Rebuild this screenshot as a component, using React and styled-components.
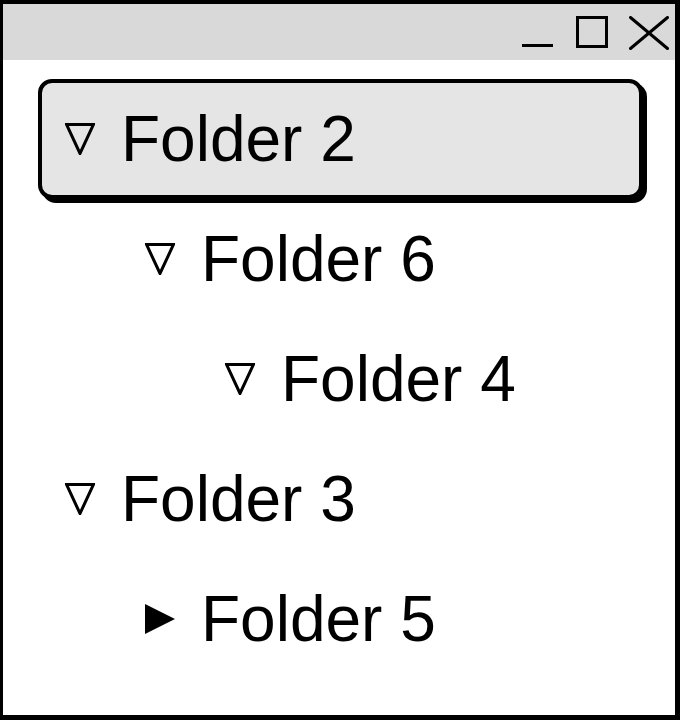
import styled, { createGlobalStyle } from 'styled-components';

const GlobalStyle = createGlobalStyle`
  html, body {
    margin: 0;
    padding: 0;
    background: #fff;
  }
  * {
    box-sizing: border-box;
  }
`;

const folders = [
  { name: 'Folder 2', depth: 0, open: true, selected: true },
  { name: 'Folder 6', depth: 1, open: true },
  { name: 'Folder 4', depth: 2, open: true },
  { name: 'Folder 3', depth: 0, open: true },
  { name: 'Folder 5', depth: 1, open: false },
];

const OpenArrow = () => (
  <svg width="30" height="32" viewBox="0 0 30 32">
    <polygon
      points="1.5,1.5 28.5,1.5 15,30.5"
      fill="none"
      stroke="#000"
      strokeWidth="3"
    />
  </svg>
);

const ClosedArrow = () => (
  <svg width="32" height="32" viewBox="0 0 32 32">
    <polygon points="0,0 32,16 0,32" fill="#000" />
  </svg>
);

export default () => (
  <>
    <GlobalStyle />
    <Window>
      {/* TITLE BAR */}
      <TitleBar>
        <Controls>
          <svg width="34" height="34" viewBox="0 0 34 34">
            <line x1="0" y1="29.5" x2="31" y2="29.5" stroke="#000" strokeWidth="3" />
          </svg>
          <svg width="33" height="34" viewBox="0 0 33 34">
            <rect x="1.5" y="1.5" width="29" height="29" fill="none" stroke="#000" strokeWidth="3" />
          </svg>
          <svg width="40" height="34" viewBox="0 0 40 34">
            <line x1="1.5" y1="1.5" x2="38.5" y2="32.5" stroke="#000" strokeWidth="3" strokeLinecap="round" />
            <line x1="38.5" y1="1.5" x2="1.5" y2="32.5" stroke="#000" strokeWidth="3" strokeLinecap="round" />
          </svg>
        </Controls>
      </TitleBar>

      {/* TREE */}
      <Tree>
        {folders.map((f) => (
          <Row key={f.name} $selected={f.selected} $depth={f.depth}>
            <ArrowSlot>{f.open ? <OpenArrow /> : <ClosedArrow />}</ArrowSlot>
            <Label>{f.name}</Label>
          </Row>
        ))}
      </Tree>
    </Window>
  </>
);

const Window = styled.div`
  width: 100vw;
  height: 100vh;
  display: flex;
  flex-direction: column;
  border-style: solid;
  border-color: #000;
  border-width: 4px 5px 5px 3px;
  background: #fff;
  overflow: hidden;
`;

const TitleBar = styled.div`
  flex: none;
  height: 56px;
  background: #d9d9d9;
  display: flex;
  justify-content: flex-end;
  align-items: center;
  padding-right: 6px;
  padding-top: 1px;
`;

const Controls = styled.div`
  display: flex;
  align-items: center;
  gap: 20px;

  svg {
    display: block;
  }
`;

const Tree = styled.div`
  display: flex;
  flex-direction: column;
  padding: 19px 32px 0 35px;
`;

const Row = styled.div`
  height: 120px;
  display: flex;
  align-items: center;
  gap: 26px;
  padding-left: ${(p) => 23 + p.$depth * 80}px;
  border: 4px solid ${(p) => (p.$selected ? '#000' : 'transparent')};
  border-radius: 14px;
  background: ${(p) => (p.$selected ? '#e5e5e5' : 'transparent')};
  box-shadow: ${(p) => (p.$selected ? '4px 4px 0 #000' : 'none')};
`;

const ArrowSlot = styled.div`
  width: 30px;
  display: flex;
  justify-content: flex-start;
  align-items: center;

  svg {
    display: block;
  }
`;

const Label = styled.span`
  font-family: 'Liberation Sans', Arial, sans-serif;
  font-size: 64px;
  color: #000;
  line-height: 1;
`;
